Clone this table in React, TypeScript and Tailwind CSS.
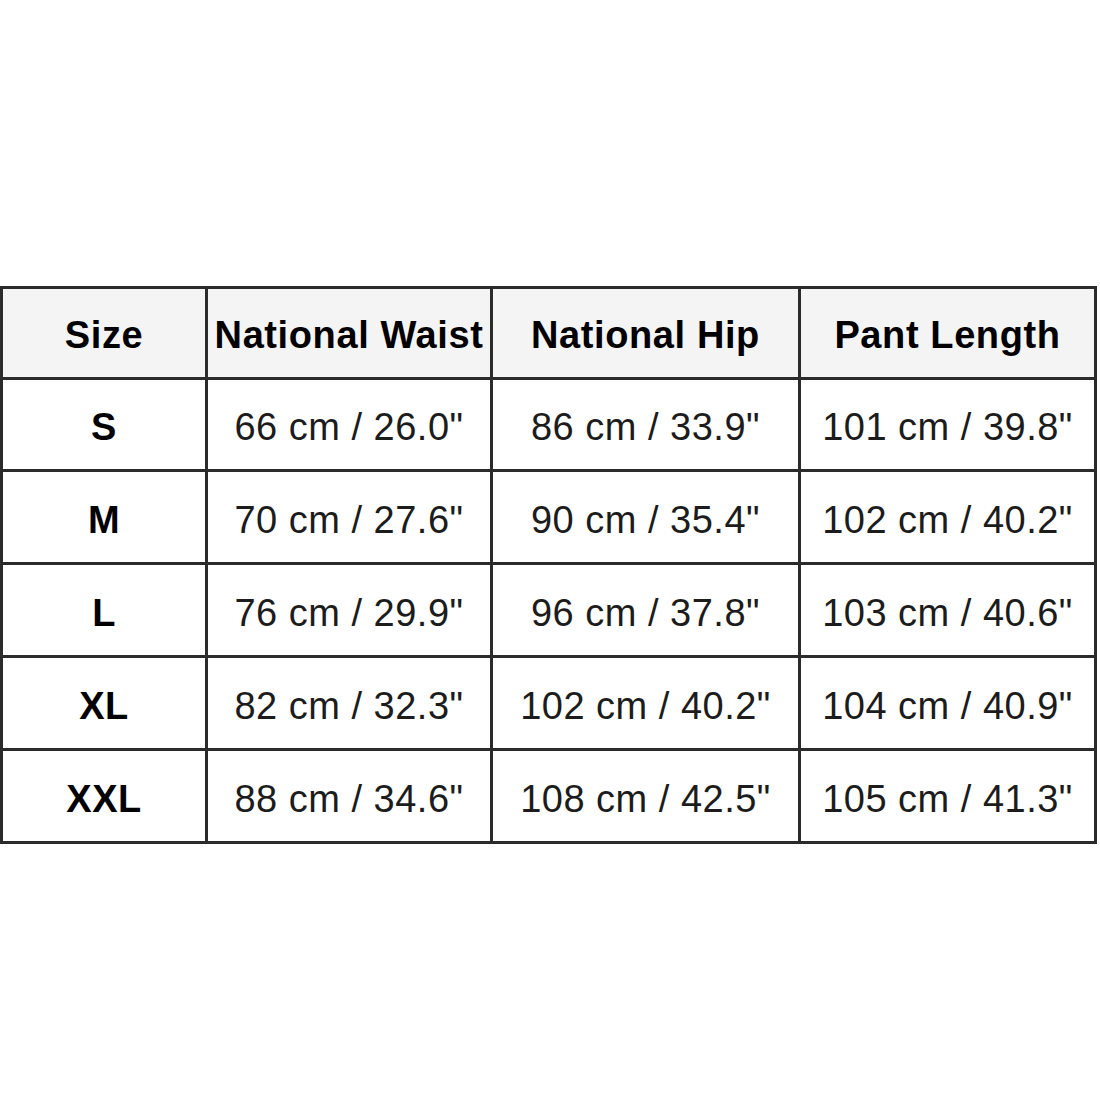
import React from "react"

const headers = ["Size", "National Waist", "National Hip", "Pant Length"]

const rows = [
    ["S", "66 cm / 26.0\"", "86 cm / 33.9\"", "101 cm / 39.8\""],
    ["M", "70 cm / 27.6\"", "90 cm / 35.4\"", "102 cm / 40.2\""],
    ["L", "76 cm / 29.9\"", "96 cm / 37.8\"", "103 cm / 40.6\""],
    ["XL", "82 cm / 32.3\"", "102 cm / 40.2\"", "104 cm / 40.9\""],
    ["XXL", "88 cm / 34.6\"", "108 cm / 42.5\"", "105 cm / 41.3\""],
]

const App = () => {
    return (
        <div className="w-[1100px] h-[1100px] bg-white pt-[286px] font-['Liberation_Sans',Arial,sans-serif]">
            <div className="w-[1097px] grid grid-cols-[202px_282px_305px_293px] grid-rows-[88px_89px_90px_90px_90px_90px] gap-[3px] p-[3px] bg-[#2b2b2b]">
                {headers.map((h) => (
                    <div
                        key={h}
                        className="bg-[#f4f4f4] flex items-center justify-center pt-[5px] text-[38px] tracking-[0.6px] font-bold text-black whitespace-nowrap overflow-visible"
                    >
                        {h}
                    </div>
                ))}
                {rows.map((row) =>
                    row.map((cell, i) => (
                        <div
                            key={row[0] + i}
                            className={
                                "bg-white flex items-center justify-center pt-[6px] text-[38px] tracking-[0.5px] whitespace-nowrap " +
                                (i === 0 ? "font-bold text-black" : "text-[#1c1c1c]")
                            }
                        >
                            {cell}
                        </div>
                    ))
                )}
            </div>
        </div>
    )
}

export default App
